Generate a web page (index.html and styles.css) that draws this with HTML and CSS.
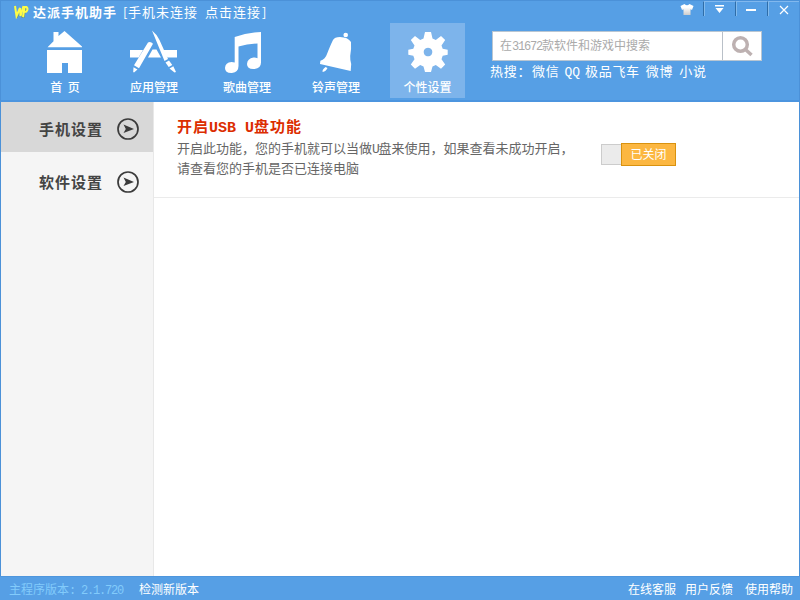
FILE: index.html
```html
<!DOCTYPE html>
<html lang="zh-CN">
<head>
<meta charset="utf-8">
<title>达派手机助手</title>
<link rel="stylesheet" href="styles.css">
</head>
<body>
<div class="window">
  <header class="header">
    <div class="titlebar">
      <svg class="logo" width="16" height="14" viewBox="0 0 16 14"><path class="logo-shadow" d="M2 2l2 11 4-7 1 7 3-9M11 13l2-10"/><path class="logo-w" d="M2 1l1.500 10 3.500-8 .5 8L10.500 1"/><path class="logo-w" d="M10 12l1.500-10h2q2 2 0 4.500l-2.500.5"/></svg>
      <b class="app-name">达派手机助手</b>
      <span class="state"><span>[</span>手机未连接</span>
      <span class="connect">点击连接<span>]</span></span>
      <div class="controls">
        <svg class="shirt" width="16" height="14" viewBox="680 3 16 14"><defs><linearGradient id="cloth" x1="0" y1="0" x2="0" y2="1"><stop offset=".3" stop-color="#fff"/><stop offset="1" stop-color="#ccc"/></linearGradient></defs><path fill="url(#cloth)" d="M684.500 4q2.500 2.500 5 0l4 2-1.500 4-1.500-.7V15h-7V9.300l-1.500.7-1.500-4z"/></svg>
        <span class="control"><svg width="12" height="10" viewBox="0 0 12 10"><path fill="#fff" d="M1 0h9v1.500H1zM1.500 3h8L5.500 8z"/></svg></span>
        <span class="control"><svg width="12" height="10" viewBox="0 0 12 10"><path fill="#fff" d="M0 4h10v2H0z"/></svg></span>
        <span class="control"><svg width="12" height="10" viewBox="0 0 12 10"><path fill="none" stroke="#fff" stroke-width="1.200" d="M2 1l8 8M10 1L2 9"/></svg></span>
      </div>
    </div>
    <div class="toolbar">
      <nav class="nav">
        <a class="item home"><svg width="60" height="46" viewBox="35 29 60 46"><path d="M47 50h35v23H68V63h-6v10H47zM47.500 47.300l6-6V32h5v4l6-5L82 46.500v.8z"/></svg><span>首&nbsp; 页</span></a>
        <a class="item apps"><svg width="60" height="46" viewBox="124 29 60 46"><path d="M130 50h13l-4.500 7.500H130zM152.500 49.500h4l4.500 8h-13zM163.500 50H177v7.500h-9.500zM148 42.500q2.500-1.500 5 1.200L139 68.300l-5-3zM133.500 67.300l4 2.300-3.500 3-.8-.5zM152 30.500q5 4 7.500 9.500l8.500 19-3.500 2zM165.500 62.500l3.500-2 3.300 4.500-3.600 2zM169.500 68.500l3.800-2.200 2.700 5.700-1.500.5z"/></svg><span>应用管理</span></a>
        <a class="item music"><svg width="60" height="46" viewBox="217 29 60 46"><path d="M234.700 37q12-4.500 26.300-5v30.500q0 5.500-6.500 6.500-7.500.5-7.500-5 .3-5.500 6.500-6.500 2-.3 4 .7V43.500q-10 .3-19 3V66q0 6-6.500 7-7 .3-7-5 .3-5.500 6.500-6 1.700 0 3.200.5z"/></svg><span>歌曲管理</span></a>
        <a class="item bell"><svg width="60" height="46" viewBox="306 29 60 46"><circle cx="345.700" cy="35" r="2.300"/><path d="M333 40q1.500-3 7-3 8 .2 11 5 .5 6-.8 14-.2 3 1 8l-.5 7L320 64l.4-3.300q5-1.700 6.600-6.700 3.500-9 6-14zM325.500 67l2 1q-1.500 3.500-4.800 4-1-2 2.800-5z"/></svg><span>铃声管理</span></a>
        <a class="item active"><svg width="60" height="46" viewBox="398 29 60 46"><path fill-rule="evenodd" d="M425 32h6l1.500 6.500 3.300 1.400 5.200-4 4.200 4.200-3.700 5.400 1.200 3.200 5 1v5l-5 1-1.200 3.500 3.700 5.300-4.200 4.200-5.200-3.700-3.300 1.400-1.500 5.600h-6l-1.500-5.600-3.300-1.400-5.200 3.700-4.200-4.200 3.700-5.300-1.200-3.500-5-1v-5l5-1 1.200-3.200-3.700-5.400 4.200-4.200 5.200 4 3.300-1.400zM428 47.700a4.300 4.300 0 1 0 .01 0z"/></svg><span>个性设置</span></a>
      </nav>
      <div class="finder">
        <div class="search">
          <div class="field">在<span class="half">31672</span>款软件和游戏中搜索</div>
          <div class="go"><svg width="24" height="24" viewBox="0 0 24 24"><circle cx="10.500" cy="10.500" r="6.800"/><path d="M15.500 15.500l6 5.500"/></svg></div>
        </div>
        <div class="hot"><span class="hot-label">热搜：</span><span>微信</span><span class="half">QQ</span><span>极品飞车</span><span>微博</span><span>小说</span></div>
      </div>
    </div>
  </header>
  <main class="main">
    <aside class="side">
      <div class="entry selected">手机设置<svg width="24" height="24" viewBox="0 0 24 24"><circle cx="12" cy="12" r="10"/><path d="M7.500 7.500L18 12 7.500 16l2.300-4z"/></svg></div>
      <div class="entry">软件设置<svg width="24" height="24" viewBox="0 0 24 24"><circle cx="12" cy="12" r="10"/><path d="M7.500 7.500L18 12 7.500 16l2.300-4z"/></svg></div>
    </aside>
    <section class="content">
      <div class="setting">
        <div class="copy">
          <h1>开启<span class="wide">USB U</span>盘功能</h1>
          <p>开启此功能，您的手机就可以当做<span class="half">U</span>盘来使用，如果查看未成功开启，<br>请查看您的手机是否已连接电脑</p>
        </div>
        <div class="switch"><span class="track"></span><span class="knob">已关闭</span></div>
      </div>
    </section>
  </main>
  <footer class="footer">
    <span class="version">主程序版本<span class="half">: 2.1.720</span></span>
    <span class="check">检测新版本</span>
    <span class="link first">在线客服</span><span class="link">用户反馈</span><span class="link last">使用帮助</span>
  </footer>
</div>
</body>
</html>
```
FILE: styles.css
```css
* { box-sizing: border-box; }
body {
  margin: 0;
  font: 12px/16px "Noto Sans CJK SC", sans-serif;
  color: #666;
}
.window { width: 800px; height: 600px; display: flex; flex-direction: column; background: #fff; overflow: hidden; }
.half { font-family: "Liberation Mono", monospace; letter-spacing: -.1em; line-height: 1; white-space: pre; }
.header {
  height: 102px;
  color: #fff;
  background: #569fe5;
  border: 1px solid #4b91d8;
  border-bottom: 2px solid #4c95df;
}
.titlebar { height: 22px; display: flex; padding-left: 12px; font-size: 13px; line-height: 21px; letter-spacing: 1px; white-space: nowrap; }
.logo { margin-top: 4px; flex: none; }
.logo path { fill: none; stroke-width: 2; }
.logo .logo-w { stroke: #fffd45; }
.logo .logo-shadow { stroke: #719c7c; stroke-width: 1; }
.app-name { width: 90px; margin-left: 4px; }
.state { width: 82px; }
.state span { display: inline-block; width: 5px; }
.connect span { letter-spacing: 0; margin-left: 1px; }
.controls { margin-left: auto; display: flex; }
.shirt { margin: 2px 7px 0 0; }
.control { width: 32px; height: 15px; border-left: 1px solid #2f6da8; border-top: 1px solid #81b8ee; display: flex; align-items: center; justify-content: center; box-shadow: inset 1px 0 #83bbed; }
.control svg { margin-top: 2px; }
.toolbar { display: flex; height: 75px; }
.nav { display: flex; padding-left: 19px; width: 464px; }
.item { display: flex; flex-direction: column; align-items: center; padding-top: 6px; font-weight: 500; text-align: center; }
.item svg { fill: #fff; flex: none; }
.item span { line-height: 16px; margin-top: 4px; white-space: nowrap; }
.home { width: 90px; }
.apps { width: 88px; }
.music { width: 98px; }
.bell { width: 80px; }
.active { width: 75px; margin-left: 14px; background: #7db4eb; }
.finder { padding: 8px 0 0 25px; }
.search { width: 270px; height: 30px; margin-left: 2px; display: flex; background: #fff; border: 1px solid #b9c6d2; }
.field { width: 230px; padding-left: 7px; line-height: 26px; color: #aaa; border-right: 1px solid #b9c0c8; white-space: nowrap; }
.go { flex: 1; display: flex; align-items: center; justify-content: center; }
.go svg { fill: none; stroke: #bdb1b1; stroke-width: 3.500; }
.hot { display: flex; align-items: baseline; gap: 6px; padding-top: 1px; font-size: 13px; line-height: 17px; letter-spacing: .7px; white-space: nowrap; }
.hot-label { width: 36px; }
.hot .half { letter-spacing: 0; margin: 0 -1px; }
.main { flex: 1; display: flex; border: solid #4b91d8; border-width: 0 1px; }
.side { width: 153px; background: #f5f5f5; border-right: 1px solid #e8e8e8; }
.entry { height: 50px; margin-bottom: 3px; display: flex; align-items: center; justify-content: space-between; padding: 3px 13px 0 38px; font-size: 15px; font-weight: 700; letter-spacing: 1px; color: #444; }
.entry.selected { background: #d8d8d8; }
.entry svg circle { fill: none; stroke: #3b3b3b; stroke-width: 1.700; }
.entry svg path { fill: #3b3b3b; }
.content { flex: 1; }
.setting { height: 96px; display: flex; align-items: flex-start; padding: 14px 0 0 23px; border-bottom: 1px solid #ebebeb; }
.copy { width: 424px; white-space: nowrap; }
h1 { height: 20px; margin: 0; font-size: 15px; line-height: 20px; letter-spacing: 1px; color: #dc2d00; }
.wide { font-family: "Liberation Mono", monospace; letter-spacing: 0; line-height: 1; }
p { margin: 2px 0 0; font-size: 13px; line-height: 20px; }
.switch { display: flex; align-items: center; margin-top: 27px; }
.track { width: 20px; height: 21px; background: #ebebeb; border: 1px solid #ccc; border-right: 0; }
.knob { width: 55px; height: 23px; line-height: 20px; text-align: center; color: #fff; background: #fcb741; border: 1px solid #d9920f; }
.footer { height: 24px; display: flex; padding: 0 7px 0 9px; line-height: 23px; color: #fff; background: #569fe5; border-top: 1px solid #4e96dd; white-space: nowrap; }
.version { width: 130px; color: #82cbfb; }
.link { margin-right: 9px; }
.link.first { margin-left: auto; }
.link.last { margin: 0 0 0 3px; }
```
